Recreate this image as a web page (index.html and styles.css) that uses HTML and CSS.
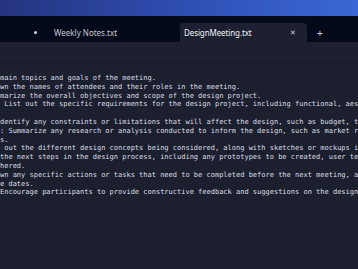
FILE: index.html
```html
<!DOCTYPE html>
<html lang="en">
<head>
    <meta charset="UTF-8">
    <meta name="viewport" content="width=device-width, initial-scale=1.0">
    <title>DesignMeeting.txt - Notepad</title>
    <link rel="stylesheet" href="styles.css">
</head>
<body>

    <!-- Window title strip -->
    <div class="titlebar"></div>

    <!-- Tabs -->
    <div class="tabs">
        <div class="tab tab-prev">
            <span class="dot"></span>
        </div>
        <div class="tab tab-weekly">
            <span class="label">Weekly Notes.txt</span>
        </div>
        <div class="tab active">
            <span class="label">DesignMeeting.txt</span>
            <span class="close">&#x2715;</span>
        </div>
        <div class="new-tab">+</div>
    </div>

    <!-- Menu strip -->
    <div class="menubar"></div>

    <!-- Editor -->
    <div class="editor">
<pre class="text">main topics and goals of the meeting.
wn the names of attendees and their roles in the meeting.
marize the overall objectives and scope of the design project.
 List out the specific requirements for the design project, including functional, aesthetic, and technical requirements.

dentify any constraints or limitations that will affect the design, such as budget, timeline, or technical limitations.
: Summarize any research or analysis conducted to inform the design, such as market research, user feedback,
s.
 out the different design concepts being considered, along with sketches or mockups if available.
the next steps in the design process, including any prototypes to be created, user testing to be conducted, or
hered.
wn any specific actions or tasks that need to be completed before the next meeting, along with responsible
e dates.
Encourage participants to provide constructive feedback and suggestions on the design concepts.</pre>
    </div>

</body>
</html>
```

FILE: styles.css
```css
/* General Page Styling */
html, body {
    height: 100%;
}

body {
    margin: 0;
    padding: 0;
    background: #1b1f2e;
    color: #d9dce4;
    font-family: 'Noto Sans', sans-serif;
    overflow: hidden;
    display: flex;
    flex-direction: column;
}

/* Blue strip at the top */
.titlebar {
    height: 16px;
    flex: none;
    background: linear-gradient(90deg, #25347f 0%, #3050b6 55%, #3a68d4 100%);
}

/* Tab strip */
.tabs {
    height: 26px;
    flex: none;
    background: #050a1a;
    display: flex;
    align-items: flex-end;
    white-space: nowrap;
}

.tab {
    height: 19px;
    flex: none;
    display: flex;
    align-items: center;
    box-sizing: border-box;
    font-size: 8px;
    color: #c4c8d2;
}

.tab-prev {
    width: 45px;
    justify-content: flex-end;
    padding-right: 8px;
}

.dot {
    width: 3px;
    height: 3px;
    border-radius: 50%;
    background: #d4d7df;
}

.tab-weekly {
    width: 135px;
    padding-left: 9px;
}

.tab.active {
    width: 127px;
    padding: 0 11px 0 4px;
    justify-content: space-between;
    background: #1c2030;
    border-radius: 4px 4px 0 0;
    color: #f2f3f6;
    letter-spacing: -0.1px;
}

.close {
    font-size: 7px;
    color: #c9ccd4;
}

.new-tab {
    width: 26px;
    height: 19px;
    flex: none;
    display: flex;
    align-items: center;
    justify-content: center;
    font-size: 11px;
    color: #c9ccd4;
}

/* Menu strip, empty in this crop */
.menubar {
    height: 20px;
    flex: none;
    background: #1c2030;
    border-bottom: 1px solid #141827;
}

/* Editor */
.editor {
    flex: 1;
    overflow: hidden;
    background: #1b1f2e;
    padding-top: 11px;
}

.text {
    margin: 0;
    font-family: 'DejaVu Sans Mono', monospace;
    font-size: 7px;
    line-height: 8.8px;
    color: #dcdfe7;
}
```
